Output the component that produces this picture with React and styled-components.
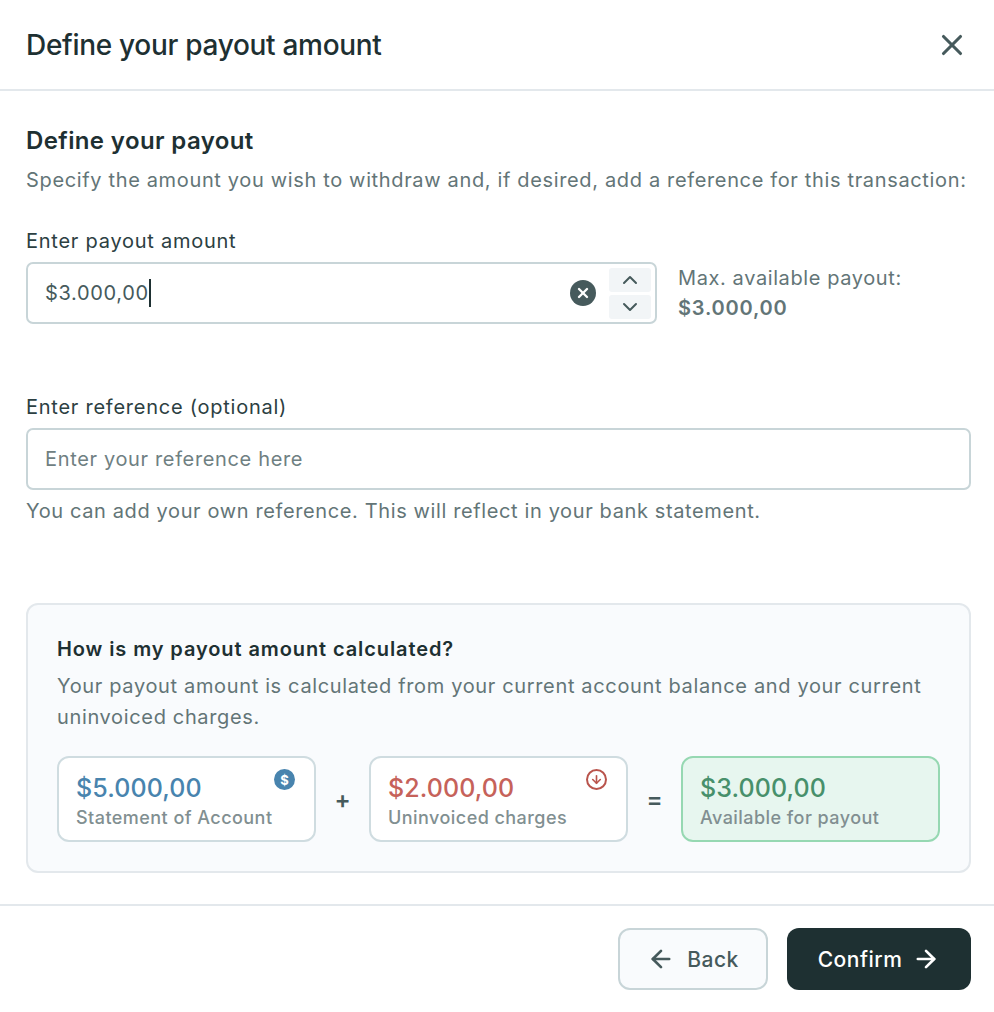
import React from 'react';
import styled, { createGlobalStyle } from 'styled-components';
import { X, ChevronUp, ChevronDown, ArrowLeft, ArrowRight, ArrowDown } from 'lucide-react';

const GlobalStyle = createGlobalStyle`
  * { box-sizing: border-box; }
  html, body { margin: 0; padding: 0; background: #fff; }
  body { font-family: Inter, "Liberation Sans", sans-serif; color: #1e3032; }
`;

const Modal = styled.div`
  width: 994px;
  height: 1012px;
  display: flex;
  flex-direction: column;
`;

const Header = styled.header`
  height: 91px;
  flex: none;
  display: flex;
  align-items: center;
  justify-content: space-between;
  padding: 0 26px;
  border-bottom: 2px solid #e3e8ec;
`;

const Title = styled.h1`
  margin: 0;
  font-size: 28px;
  line-height: 36px;
  font-weight: 500;
  letter-spacing: -0.3px;
`;

const CloseButton = styled.button`
  display: flex;
  padding: 0;
  margin-right: -1px;
  border: 0;
  background: none;
  color: #465a5c;
`;

const Body = styled.main`
  flex: 1;
  padding: 34px 23px 0 26px;
  display: flex;
  flex-direction: column;
`;

const Heading = styled.h2`
  margin: 0;
  font-size: 24px;
  line-height: 32px;
  font-weight: 600;
  letter-spacing: 0.38px;
`;

const Lead = styled.p`
  margin: 8px 0 0;
  font-size: 20px;
  line-height: 30px;
  color: #637577;
  letter-spacing: 0.65px;
  white-space: nowrap;
`;

const Label = styled.div`
  font-size: 20px;
  line-height: 30px;
  color: #2c4042;
  letter-spacing: 0.75px;
  margin-bottom: 6px;
`;

const AmountField = styled.section`
  margin-top: 31px;
`;

const AmountRow = styled.div`
  display: flex;
  align-items: center;
  gap: 21px;
`;

const Input = styled.div`
  flex: none;
  width: ${p => p.$width || 945}px;
  height: 62px;
  display: flex;
  align-items: center;
  padding: 0 4px 0 17px;
  background: #fff;
  border: 2px solid #c8d5d8;
  border-radius: 7px;
  font-size: 20px;
  letter-spacing: 0.65px;
  color: ${p => (p.$placeholder ? '#6f8082' : '#465a5c')};
`;

const Caret = styled.span`
  width: 2px;
  height: 28px;
  background: #1e3032;
`;

const Spacer = styled.div`
  flex: 1;
`;

const ClearButton = styled.span`
  width: 26px;
  height: 26px;
  margin-right: 13px;
  border-radius: 50%;
  background: #465a5c;
  color: #fff;
  display: flex;
  align-items: center;
  justify-content: center;
`;

const Steppers = styled.div`
  display: flex;
  flex-direction: column;
  gap: 3px;
`;

const Stepper = styled.span`
  width: 42px;
  height: 24px;
  border-radius: 3px;
  background: #f2f5f7;
  color: #465a5c;
  display: flex;
  align-items: center;
  justify-content: center;
`;

const MaxInfo = styled.div`
  font-size: 20px;
  line-height: 30px;
  letter-spacing: 0.6px;
  color: #637577;
`;

const MaxValue = styled.div`
  font-weight: 600;
  letter-spacing: 0.8px;
`;

const ReferenceField = styled.section`
  margin-top: 68px;
`;

const Hint = styled.p`
  margin: 6px 0 0;
  font-size: 20px;
  line-height: 30px;
  letter-spacing: 0.62px;
  color: #637577;
`;

const InfoCard = styled.section`
  margin-top: 77px;
  height: 270px;
  padding: 29px 29px 0;
  background: #f9fbfd;
  border: 2px solid #e3e8ec;
  border-radius: 12px;
`;

const InfoTitle = styled.h3`
  margin: 0;
  font-size: 20px;
  line-height: 30px;
  font-weight: 600;
  letter-spacing: 0.9px;
`;

const InfoText = styled.p`
  margin: 7px 0 0;
  font-size: 20px;
  line-height: 31px;
  letter-spacing: 0.65px;
  color: #637577;
`;

const Equation = styled.div`
  margin-top: 23px;
  display: flex;
  align-items: center;
`;

const Operator = styled.span`
  width: 53px;
  flex: none;
  text-align: center;
  font-size: 24px;
  font-weight: 600;
  color: #465a5c;
`;

const Tile = styled.div`
  position: relative;
  width: 259px;
  height: 86px;
  flex: none;
  padding: 14px 17px 0;
  background: ${p => (p.$tone === 'green' ? '#e7f6ef' : '#fff')};
  border: 2px solid ${p => (p.$tone === 'green' ? '#96d8b2' : '#cfdce0')};
  border-radius: 12px;
`;

const toneColor = { blue: '#4884ae', red: '#c6625a', green: '#47906b' };

const TileValue = styled.div`
  font-size: 25px;
  line-height: 32px;
  font-weight: 500;
  letter-spacing: 0.1px;
  margin-bottom: 1px;
  color: ${p => toneColor[p.$tone]};
`;

const TileLabel = styled.div`
  font-size: 18px;
  line-height: 26px;
  font-weight: 500;
  letter-spacing: 0.45px;
  color: #818f91;
`;

const TileBadge = styled.span`
  position: absolute;
  top: 11px;
  right: 19px;
  width: 21px;
  height: 21px;
  border-radius: 50%;
  display: flex;
  align-items: center;
  justify-content: center;
  background: ${p => (p.$outline ? 'transparent' : '#4884ae')};
  border: ${p => (p.$outline ? '2px solid #b9544c' : '0')};
  color: ${p => (p.$outline ? '#b9544c' : '#fff')};
  font-size: 13px;
  font-weight: 700;
`;

const Footer = styled.footer`
  height: 108px;
  flex: none;
  display: flex;
  justify-content: flex-end;
  align-items: flex-start;
  gap: 19px;
  padding: 22px 23px 0 0;
  border-top: 2px solid #e3e8ec;
`;

const Button = styled.button`
  height: 62px;
  display: flex;
  align-items: center;
  justify-content: center;
  gap: ${p => (p.$primary ? 10 : 12)}px;
  width: ${p => (p.$primary ? 184 : 150)}px;
  padding: 0;
  font-family: inherit;
  font-size: 21px;
  font-weight: 500;
  letter-spacing: 0.5px;
  border-radius: 12px;
  border: ${p => (p.$primary ? '0' : '2px solid #c8d5d8')};
  background: ${p => (p.$primary ? '#1e3032' : '#f9fbfd')};
  color: ${p => (p.$primary ? '#fff' : '#465a5c')};
`;

export default function App() {
  return (
    <Modal>
      <GlobalStyle />
      <Header>
        <Title>Define your payout amount</Title>
        <CloseButton aria-label="Close"><X size={34} strokeWidth={2.2} /></CloseButton>
      </Header>
      <Body>
        <Heading>Define your payout</Heading>
        <Lead>Specify the amount you wish to withdraw and, if desired, add a reference for this transaction:</Lead>
        <AmountField>
          <Label>Enter payout amount</Label>
          <AmountRow>
            <Input $width={631}>
              $3.000,00<Caret />
              <Spacer />
              <ClearButton><X size={16} strokeWidth={3.5} /></ClearButton>
              <Steppers>
                <Stepper><ChevronUp size={24} strokeWidth={2} /></Stepper>
                <Stepper><ChevronDown size={24} strokeWidth={2} /></Stepper>
              </Steppers>
            </Input>
            <MaxInfo>
              Max. available payout:
              <MaxValue>$3.000,00</MaxValue>
            </MaxInfo>
          </AmountRow>
        </AmountField>
        <ReferenceField>
          <Label>Enter reference (optional)</Label>
          <Input $placeholder>Enter your reference here</Input>
          <Hint>You can add your own reference. This will reflect in your bank statement.</Hint>
        </ReferenceField>
        <InfoCard>
          <InfoTitle>How is my payout amount calculated?</InfoTitle>
          <InfoText>Your payout amount is calculated from your current account balance and your current uninvoiced charges.</InfoText>
          <Equation>
            <Tile>
              <TileValue $tone="blue">$5.000,00</TileValue>
              <TileLabel>Statement of Account</TileLabel>
              <TileBadge>$</TileBadge>
            </Tile>
            <Operator>+</Operator>
            <Tile>
              <TileValue $tone="red">$2.000,00</TileValue>
              <TileLabel>Uninvoiced charges</TileLabel>
              <TileBadge $outline><ArrowDown size={13} strokeWidth={3} /></TileBadge>
            </Tile>
            <Operator>=</Operator>
            <Tile $tone="green">
              <TileValue $tone="green">$3.000,00</TileValue>
              <TileLabel>Available for payout</TileLabel>
            </Tile>
          </Equation>
        </InfoCard>
      </Body>
      <Footer>
        <Button><ArrowLeft size={28} strokeWidth={2.3} />Back</Button>
        <Button $primary>Confirm<ArrowRight size={28} strokeWidth={2.3} /></Button>
      </Footer>
    </Modal>
  );
}
